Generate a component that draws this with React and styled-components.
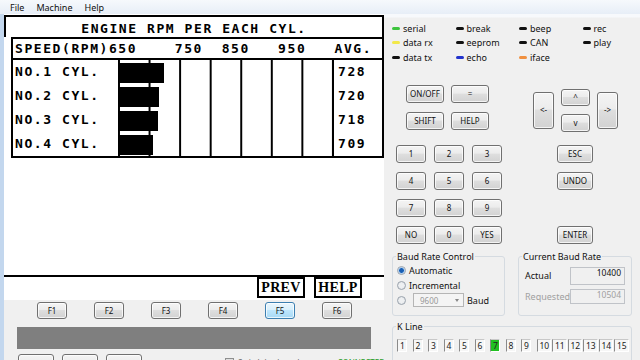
import React from 'react';
import styled, { createGlobalStyle } from 'styled-components';

const Global = createGlobalStyle`
  html, body { margin: 0; padding: 0; width: 640px; height: 360px; overflow: hidden; background: #f0f0f0; }
  #root { width: 640px; height: 360px; }
`;

const ui = `"Noto Sans", "Open Sans", sans-serif`;
const lcd = `"DejaVu Sans Mono", "Liberation Mono", monospace`;

const Window = styled.div`
  width: 640px; height: 360px; overflow: hidden;
  display: grid; grid-template-rows: 14px 346px;
  background: #f0f0f0; font-family: ${ui}; color: #111;
`;
const MenuBar = styled.div`
  display: flex; align-items: center; padding-left: 4px;
  background: linear-gradient(#f6f9fc, #e7eef7);
  font-size: 9px;
`;
const MenuItem = styled.span`padding: 0 6px;`;

const Body = styled.div`display: flex; min-height: 0; overflow: hidden;`;
const Frame = styled.div`width: 4px; flex-shrink: 0; background: #c3d7ee;`;
const LeftPanel = styled.div`width: 380px; flex-shrink: 0; display: flex; flex-direction: column; overflow: hidden;`;

const Lcd = styled.div`
  height: 286px; flex-shrink: 0; box-sizing: border-box; padding-top: 1px; background: #fff;
  display: flex; flex-direction: column;
  font-family: ${lcd}; font-weight: bold; font-size: 13px; letter-spacing: 1.57px; color: #000;
`;
const TitleBox = styled.div`
  height: 22px; box-sizing: border-box; border: 2px solid #000; border-bottom: 0;
  display: flex; align-items: center; justify-content: center; padding-top: 3px;
`;
const HeaderBox = styled.div`
  margin-left: 7px; height: 23px; box-sizing: border-box; border: 2px solid #000;
  padding-left: 2px; white-space: pre; line-height: 19px;
`;
const Table = styled.div`
  margin-left: 7px; border: 2px solid #000; border-top: 0;
`;
const Row = styled.div`
  display: grid; grid-template-columns: 105px 214px 50px; height: 24px;
`;
const LabelCell = styled.div`padding-left: 2px; line-height: 24px; white-space: pre;`;
const BarCell = styled.div`
  box-sizing: border-box; padding-top: 3px;
  background-image: linear-gradient(90deg, #000 2px, transparent 2px);
  background-size: 30.57px 100%;
`;
const Bar = styled.div`height: 20px; background: #000;`;
const AvgCell = styled.div`border-left: 2px solid #000; padding-left: 4px; line-height: 24px;`;
const Spacer = styled.div`flex: 1;`;
const Divider = styled.div`height: 2px; flex-shrink: 0; background: #000;`;
const SoftRow = styled.div`display: flex; justify-content: flex-end; gap: 9px; padding-right: 22px; margin-bottom: 2px;`;
const SoftKey = styled.div`
  width: 48px; height: 21px; box-sizing: border-box; border: 2px solid #000;
  display: flex; align-items: center; justify-content: center;
  font-family: "Liberation Serif", serif; font-size: 14px; letter-spacing: 0.3px;
`;

const Controls = styled.div`flex: 1; min-height: 0; display: flex; flex-direction: column; padding-top: 2px;`;
const FRow = styled.div`display: flex; gap: 27px; padding-left: 33px;`;
const GrayBar = styled.div`margin: 8px 0 0 13px; width: 354px; height: 22px; flex-shrink: 0; background: #7f7f7f;`;
const BottomRow = styled.div`display: flex; align-items: flex-start; gap: 8px; margin-top: 5px; padding-left: 14px; white-space: nowrap;`;
const CheckWrap = styled.div`
  margin-left: 75px; margin-top: 3px; display: flex; align-items: center; gap: 4px;
  font-size: 8px; color: #666;
`;
const CheckBox = styled.span`
  width: 9px; height: 9px; box-sizing: border-box; border: 1px solid #8e8f8f;
  background: linear-gradient(#dcdcdc, #f5f5f5);
`;
const GreenText = styled.span`margin-left: 30px; margin-top: 3px; font-size: 8px; color: #2a9d2a;`;

const Btn = styled.button`
  box-sizing: border-box; width: ${p => p.$w || 30}px; height: ${p => p.$h || 18}px; padding: 0; flex-shrink: 0;
  border: 1px solid ${p => (p.$active ? '#3c7fb1' : '#707070')}; border-radius: 3px;
  background: ${p => (p.$active
    ? 'linear-gradient(#eaf6fd 0%, #d9f0fc 45%, #bee6fd 50%, #a7d9f5 100%)'
    : 'linear-gradient(#f4f4f4 0%, #ececec 45%, #dedede 50%, #d2d2d2 100%)')};
  box-shadow: inset 0 0 0 1px rgba(255,255,255,.75);
  font-family: ${ui}; font-size: 8px; color: #111; line-height: 1;
  display: flex; align-items: center; justify-content: center;
  ${p => (p.$col ? `grid-column: ${p.$col};` : '')}
  ${p => (p.$row ? `grid-row: ${p.$row};` : '')}
  ${p => (p.$center ? 'align-self: center;' : '')}
`;

const RightPanel = styled.div`
  flex: 1; display: flex; flex-direction: column; padding-left: 8px;
  border-right: 1px solid #dfe4ea; margin-right: 4px;
  background: linear-gradient(#f7f9fc 0, #f7f9fc 3px, #f0f0f0 4px);
`;
const StatusGrid = styled.div`
  display: grid; grid-template-columns: repeat(4, 63.5px); grid-auto-rows: 14.5px; padding-top: 7px;
`;
const Indicator = styled.div`display: flex; align-items: center; gap: 3px; font-size: 9px;`;
const Dash = styled.span`width: 8px; height: 3px; border-radius: 1.5px; background: ${p => p.$c};`;

const KeyTop = styled.div`display: flex; margin-top: 20px;`;
const LeftTop = styled.div`
  display: grid; grid-template-columns: 38px 38px; column-gap: 7px; row-gap: 9px;
  grid-auto-rows: 18px; margin-left: 14px;
`;
const ArrowCluster = styled.div`
  display: grid; grid-template-columns: 21px 29px 21px; column-gap: 7px;
  grid-template-rows: 17px 18px; row-gap: 8px; margin: 4px 0 0 44px;
`;
const KeyBottom = styled.div`display: flex; margin-top: 13px;`;
const NumGrid = styled.div`
  display: grid; grid-template-columns: repeat(3, 30px); column-gap: 8px;
  grid-auto-rows: 18px; row-gap: 9px; margin-left: 4px;
`;
const SideCol = styled.div`
  display: grid; grid-template-rows: repeat(4, 18px); row-gap: 9px; margin-left: 55px;
`;

const GroupsRow = styled.div`display: flex; gap: 13px; margin-top: 7px;`;
const Group = styled.fieldset`
  box-sizing: border-box; width: ${p => p.$w}px; height: ${p => p.$h}px; margin: ${p => p.$mt || 0}px 0 0 0;
  padding: 0 3px 3px; border: 1px solid #d5dbe1; border-radius: 3px; min-width: 0; flex-shrink: 0;
`;
const Legend = styled.legend`padding: 0 1px; font-size: 9px; line-height: 12px; color: #111;`;
const RadioRow = styled.div`display: flex; align-items: center; height: 15px; gap: 3px; font-size: 9px; color: #111;`;
const Radio = styled.span`
  width: 9px; height: 9px; box-sizing: border-box; border-radius: 50%; margin-left: 1px;
  border: 1px solid #9aa3ad;
  background: ${p => (p.$on
    ? 'radial-gradient(circle, #1a5fb4 0 2px, #7fb3e8 2.5px, #e6eef6 3.5px)'
    : 'radial-gradient(circle, #eef0f2 0 2px, #dfe2e6 4px)')};
`;
const Select = styled.div`
  width: 51px; height: 14px; box-sizing: border-box; border: 1px solid #b5b5b5; background: #f4f4f4;
  display: flex; align-items: center; justify-content: space-between; padding: 0 4px 0 6px;
  font-size: 8px; color: #999; margin-left: 4px;
`;
const Caret = styled.span`
  width: 0; height: 0; border-left: 2.5px solid transparent; border-right: 2.5px solid transparent;
  border-top: 3px solid #888;
`;
const FieldRow = styled.div`
  display: flex; align-items: center; justify-content: space-between; margin-top: ${p => p.$mt}px;
  padding: 0 3px 0 3px; font-size: 9px; color: ${p => (p.$dim ? '#a0a0a0' : '#111')};
`;
const ValueBox = styled.div`
  width: 55px; height: ${p => p.$h}px; box-sizing: border-box; border: 1px solid #c0c3c8;
  background: #f0f0f0; text-align: right; padding: 1px 3px 0 0; font-size: 8.5px; line-height: 1;
`;
const KLineRow = styled.div`display: grid; grid-template-columns: repeat(15, 15.5px); margin: 6px 0 0 1px;`;
const KBox = styled.span`
  justify-self: start; height: 13px; min-width: 10px; box-sizing: border-box; padding: 0 1px 0 2px;
  border-left: 1px solid #8a8a8a; border-top: 1px solid #c8c8c8; border-right: 1px solid #fff; border-bottom: 1px solid #fff;
  background: ${p => (p.$on ? '#21c021' : '#f6f6f6')};
  font-size: 8.5px; line-height: 12px; color: #222;
`;

const cylinders = [
  { label: 'NO.1 CYL.', avg: 728 },
  { label: 'NO.2 CYL.', avg: 720 },
  { label: 'NO.3 CYL.', avg: 718 },
  { label: 'NO.4 CYL.', avg: 709 },
];

const indicators = [
  ['serial', '#3ec43e'], ['break', '#111'], ['beep', '#111'], ['rec', '#111'],
  ['data rx', '#f2e84a'], ['eeprom', '#111'], ['CAN', '#111'], ['play', '#111'],
  ['data tx', '#111'], ['echo', '#2233cc'], ['iface', '#f09040'],
];

export default function App() {
  return (
    <>
      <Global />
      <Window>
        <MenuBar>
          <MenuItem>File</MenuItem>
          <MenuItem>Machine</MenuItem>
          <MenuItem>Help</MenuItem>
        </MenuBar>
        <Body>
          <Frame />
          <LeftPanel>
            <Lcd>
              <TitleBox>ENGINE RPM PER EACH CYL.</TitleBox>
              <HeaderBox>{'SPEED(RPM)650    750  850   950   AVG.'}</HeaderBox>
              <Table>
                {cylinders.map(c => (
                  <Row key={c.label}>
                    <LabelCell>{c.label}</LabelCell>
                    <BarCell>
                      <Bar style={{ width: `${Math.round((c.avg - 650) * 0.59)}px` }} />
                    </BarCell>
                    <AvgCell>{c.avg}</AvgCell>
                  </Row>
                ))}
              </Table>
              <Spacer />
              <Divider />
              <SoftRow>
                <SoftKey>PREV</SoftKey>
                <SoftKey>HELP</SoftKey>
              </SoftRow>
            </Lcd>
            <Controls>
              <FRow>
                {['F1', 'F2', 'F3', 'F4', 'F5', 'F6'].map(f => (
                  <Btn key={f} $w={30} $h={17} $active={f === 'F5'}>{f}</Btn>
                ))}
              </FRow>
              <GrayBar />
              <BottomRow>
                <Btn $w={36} $h={20}>OBD</Btn>
                <Btn $w={36} $h={20}>PLAY</Btn>
                <Btn $w={36} $h={20}>STOP</Btn>
                <CheckWrap><CheckBox />Switch keyboard</CheckWrap>
                <GreenText>CONNECTED</GreenText>
              </BottomRow>
            </Controls>
          </LeftPanel>
          <RightPanel>
            <StatusGrid>
              {indicators.map(([t, c]) => (
                <Indicator key={t}><Dash $c={c} />{t}</Indicator>
              ))}
            </StatusGrid>
            <KeyTop>
              <LeftTop>
                <Btn $w={38}>ON/OFF</Btn>
                <Btn $w={38}>=</Btn>
                <Btn $w={38}>SHIFT</Btn>
                <Btn $w={38}>HELP</Btn>
              </LeftTop>
              <ArrowCluster>
                <Btn $w={21} $h={37} $col="1" $row="1 / span 2" $center>&lt;-</Btn>
                <Btn $w={29} $h={17} $col="2" $row="1">^</Btn>
                <Btn $w={29} $h={18} $col="2" $row="2">v</Btn>
                <Btn $w={21} $h={37} $col="3" $row="1 / span 2" $center>-&gt;</Btn>
              </ArrowCluster>
            </KeyTop>
            <KeyBottom>
              <NumGrid>
                {['1', '2', '3', '4', '5', '6', '7', '8', '9', 'NO', '0', 'YES'].map(k => (
                  <Btn key={k} $w={30}>{k}</Btn>
                ))}
              </NumGrid>
              <SideCol>
                <Btn $w={36}>ESC</Btn>
                <Btn $w={36}>UNDO</Btn>
                <span />
                <Btn $w={36}>ENTER</Btn>
              </SideCol>
            </KeyBottom>
            <GroupsRow>
              <Group $w={113} $h={65}>
                <Legend>Baud Rate Control</Legend>
                <RadioRow><Radio $on />Automatic</RadioRow>
                <RadioRow><Radio />Incremental</RadioRow>
                <RadioRow><Radio /><Select>9600<Caret /></Select>Baud</RadioRow>
              </Group>
              <Group $w={114} $h={65}>
                <Legend>Current Baud Rate</Legend>
                <FieldRow $mt={4}>Actual<ValueBox $h={18}>10400</ValueBox></FieldRow>
                <FieldRow $mt={4} $dim>Requested<ValueBox $h={15}>10504</ValueBox></FieldRow>
              </Group>
            </GroupsRow>
            <Group $w={240} $h={50} $mt={5}>
              <Legend>K Line</Legend>
              <KLineRow>
                {Array.from({ length: 15 }, (_, i) => (
                  <KBox key={i} $on={i === 6}>{i + 1}</KBox>
                ))}
              </KLineRow>
            </Group>
          </RightPanel>
        </Body>
      </Window>
    </>
  );
}
